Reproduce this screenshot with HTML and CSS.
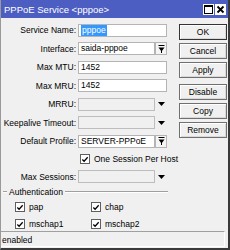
FILE: index.html
```html
<!DOCTYPE html>
<html>
<head>
<meta charset="utf-8">
<link rel="stylesheet" href="styles.css">
</head>
<body>
<div class="window">
  <div class="titlebar">
    <span class="title">PPPoE Service &lt;pppoe&gt;</span>
    <span class="tbtns">
      <span class="tbtn"><svg width="9" height="9" viewBox="0 0 9 9"><rect x="0.5" y="0.5" width="8" height="8" fill="none" stroke="#000"/><line x1="0" y1="1.5" x2="9" y2="1.5" stroke="#000"/></svg></span>
      <span class="tbtn"><svg width="9" height="9" viewBox="0 0 9 9"><path d="M1.5 1.5 L7.5 7.5 M7.5 1.5 L1.5 7.5" stroke="#000" stroke-width="1.8"/></svg></span>
    </span>
  </div>
  <div class="main">
    <div class="form">
      <div class="row"><span class="label">Service Name:</span><span class="input"><span class="sel">pppoe</span></span></div>
      <div class="row"><span class="label">Interface:</span><span class="input short">saida-pppoe</span><span class="ddbtn"><svg width="7" height="8" viewBox="0 0 7 8"><path d="M0.5 0.5H6.5" stroke="#000"/><path d="M0.5 2.5H6.5L3.5 6.5Z" fill="#000"/><path d="M3.5 5V8" stroke="#000"/></svg></span></div>
      <div class="row"><span class="label">Max MTU:</span><span class="input">1452</span></div>
      <div class="row"><span class="label">Max MRU:</span><span class="input">1452</span></div>
      <div class="row"><span class="label">MRRU:</span><span class="input short empty"></span><span class="arrow"><svg width="7" height="4" viewBox="0 0 7 4"><path d="M0 0H7L3.5 4Z" fill="#000"/></svg></span></div>
      <div class="row"><span class="label">Keepalive Timeout:</span><span class="input short empty"></span><span class="arrow"><svg width="7" height="4" viewBox="0 0 7 4"><path d="M0 0H7L3.5 4Z" fill="#000"/></svg></span></div>
      <div class="row"><span class="label">Default Profile:</span><span class="input short">SERVER-PPPoE</span><span class="ddbtn"><svg width="7" height="8" viewBox="0 0 7 8"><path d="M0.5 0.5H6.5" stroke="#000"/><path d="M0.5 2.5H6.5L3.5 6.5Z" fill="#000"/><path d="M3.5 5V8" stroke="#000"/></svg></span></div>
      <div class="row check-row"><span class="label"></span><span class="cb"><svg width="9" height="9" viewBox="0 0 9 9"><path d="M1.5 4.5L3.5 6.5L7.5 2" fill="none" stroke="#000" stroke-width="1.4"/></svg></span><span class="cbtext">One Session Per Host</span></div>
      <div class="row"><span class="label">Max Sessions:</span><span class="input short empty"></span><span class="arrow"><svg width="7" height="4" viewBox="0 0 7 4"><path d="M0 0H7L3.5 4Z" fill="#000"/></svg></span></div>
      <div class="group">
        <span class="gline small"></span><span class="gtitle">Authentication</span><span class="gline"></span>
      </div>
      <div class="auth">
        <div class="aitem"><span class="cb"><svg width="9" height="9" viewBox="0 0 9 9"><path d="M1.5 4.5L3.5 6.5L7.5 2" fill="none" stroke="#000" stroke-width="1.4"/></svg></span><span class="cbtext">pap</span></div>
        <div class="aitem"><span class="cb"><svg width="9" height="9" viewBox="0 0 9 9"><path d="M1.5 4.5L3.5 6.5L7.5 2" fill="none" stroke="#000" stroke-width="1.4"/></svg></span><span class="cbtext">chap</span></div>
        <div class="aitem"><span class="cb"><svg width="9" height="9" viewBox="0 0 9 9"><path d="M1.5 4.5L3.5 6.5L7.5 2" fill="none" stroke="#000" stroke-width="1.4"/></svg></span><span class="cbtext">mschap1</span></div>
        <div class="aitem"><span class="cb"><svg width="9" height="9" viewBox="0 0 9 9"><path d="M1.5 4.5L3.5 6.5L7.5 2" fill="none" stroke="#000" stroke-width="1.4"/></svg></span><span class="cbtext">mschap2</span></div>
      </div>
    </div>
    <div class="buttons">
      <div class="btn default">OK</div>
      <div class="btn">Cancel</div>
      <div class="btn">Apply</div>
      <div class="btn gap">Disable</div>
      <div class="btn">Copy</div>
      <div class="btn">Remove</div>
    </div>
  </div>
  <div class="status"><span class="stext">enabled</span></div>
</div>
</body>
</html>
```
FILE: styles.css
```css
html, body {
  margin: 0;
  padding: 0;
  background: #f0f0f0;
}
.window {
  width: 230px;
  height: 250px;
  box-sizing: border-box;
  background: #f0f0f0;
  border-right: 2px solid #3a3a3a;
  border-bottom: 2px solid #3a3a3a;
  border-left: 1px solid #9a9a9a;
  font-family: "Liberation Sans", Arial, sans-serif;
  font-size: 8.5px;
  color: #000;
  display: flex;
  flex-direction: column;
  overflow: hidden;
  white-space: nowrap;
}
.titlebar {
  height: 18px;
  background: #4d5ec2;
  margin-left: -1px;
  display: flex;
  align-items: center;
  justify-content: space-between;
  padding: 0 2px 0 4px;
  flex: none;
}
.title {
  color: #fff;
  font-size: 9.5px;
}
.tbtns {
  display: flex;
  gap: 1px;
}
.tbtn {
  width: 11px;
  height: 11px;
  background: #fff;
  display: flex;
  align-items: center;
  justify-content: center;
}
.main {
  display: flex;
  flex: 1;
  padding-top: 3px;
  min-height: 0;
}
.form {
  width: 176px;
  flex: none;
  display: flex;
  flex-direction: column;
}
.row {
  display: flex;
  align-items: center;
  height: 18.5px;
  flex: none;
}
.label {
  width: 77px;
  text-align: right;
  padding-right: 2px;
  box-sizing: border-box;
  flex: none;
}
.input {
  width: 89px;
  height: 13px;
  box-sizing: border-box;
  background: #fff;
  border: 1px solid #b4b4b4;
  padding-left: 2px;
  line-height: 11px;
  display: flex;
  align-items: center;
  flex: none;
}
.input.short {
  width: 77px;
}
.input.empty {
  background: #f0f0f0;
  border-color: #bdbdbd;
}
.sel {
  background: #3399ff;
  color: #fff;
  padding: 0 1px;
}
.ddbtn {
  width: 12px;
  height: 13px;
  box-sizing: border-box;
  border: 1px solid #b4b4b4;
  background: #f5f5f5;
  display: flex;
  align-items: center;
  justify-content: center;
  flex: none;
}
.arrow {
  width: 12px;
  display: flex;
  justify-content: center;
  flex: none;
}
.check-row {
  height: 17px;
}
.cb {
  width: 10px;
  height: 10px;
  box-sizing: border-box;
  border: 1px solid #5f5f5f;
  background: #fff;
  display: flex;
  align-items: center;
  justify-content: center;
  margin-right: 4px;
  margin-left: 2px;
  flex: none;
}
.cb svg {
  display: block;
}
.group {
  display: flex;
  align-items: center;
  height: 12px;
  padding-right: 9px;
  flex: none;
}
.gline {
  flex: 1;
  height: 0;
  border-top: 1px solid #a0a0a0;
  border-bottom: 1px solid #fff;
  margin-left: 2px;
}
.gline.small {
  flex: none;
  width: 4px;
  margin-left: 2px;
  margin-right: 2px;
}
.auth {
  display: grid;
  grid-template-columns: 76px 76px;
  padding-left: 12px;
  row-gap: 4px;
  margin-top: 2.5px;
}
.aitem {
  display: flex;
  align-items: center;
  height: 13px;
}
.buttons {
  width: 48px;
  display: flex;
  flex-direction: column;
  gap: 3px;
  padding-left: 2px;
  padding-top: 3px;
}
.btn {
  height: 16px;
  flex: none;
  box-sizing: border-box;
  border: 1px solid #707070;
  box-shadow: inset 1px 1px 0 #fff, inset -1px -1px 0 #d8d8d8;
  background: #f0f0f0;
  display: flex;
  align-items: center;
  justify-content: center;
}
.btn.default {
  border-color: #333;
}
.btn.gap {
  margin-top: 3px;
}
.status {
  height: 15px;
  margin: 0 3px 1px 0;
  border-top: 1px solid #a0a0a0;
  border-right: 1px solid #fff;
  box-shadow: 0 -1px 0 #fff inset;
  display: flex;
  align-items: center;
  flex: none;
}
.stext {
  padding-left: 1px;
}
```
